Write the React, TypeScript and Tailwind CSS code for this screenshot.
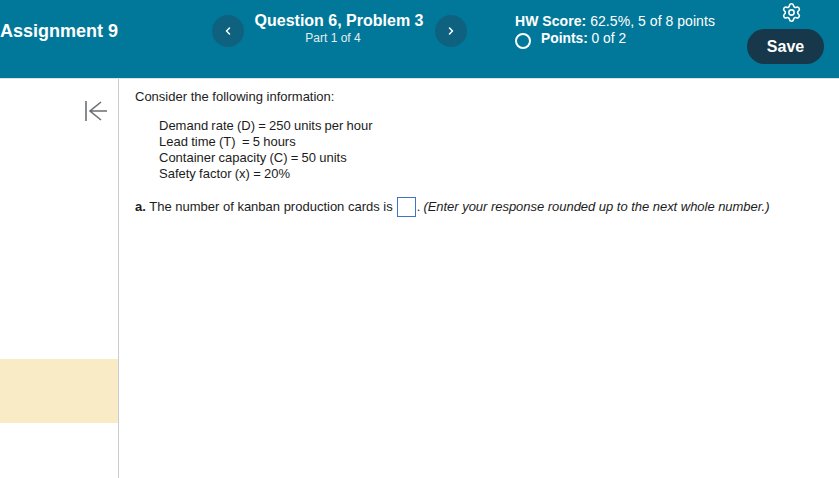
import { ChevronLeft, ChevronRight, Settings } from 'lucide-react';

const givens = [
  'Demand rate (D) = 250 units per hour',
  'Lead time (T)  = 5 hours',
  'Container capacity (C) = 50 units',
  'Safety factor (x) = 20%',
];

function NavButton({ children }: { children: React.ReactNode }) {
  return (
    <div className="w-8 h-8 rounded-full bg-[#0f627f] flex items-center justify-center text-white">
      {children}
    </div>
  );
}

export default function App() {
  return (
    <div className="w-[839px] h-[478px] overflow-hidden bg-white flex flex-col font-['Liberation_Sans',Arial,sans-serif]">
      {/* Header */}
      <div className="h-[79px] shrink-0 bg-[#017899] border-b border-[#d9e2e6] flex items-start text-white">
        <div className="w-[212px] pt-[21px] text-[18px] leading-[21px] font-bold">Assignment 9</div>
        <div className="pt-[15px]">
          <NavButton><ChevronLeft size={12} strokeWidth={3} /></NavButton>
        </div>
        <div className="w-[180px] ml-[5px] pt-[11px] text-center">
          <div className="text-[16px] leading-[19px] font-bold whitespace-nowrap">Question 6, Problem 3</div>
          <div className="pr-[12px] text-[12px] leading-[17px] text-[#e3eef2]">Part 1 of 4</div>
        </div>
        <div className="pt-[15px] ml-[6px]">
          <NavButton><ChevronRight size={12} strokeWidth={3} /></NavButton>
        </div>
        <div className="w-[232px] ml-[48px] pt-[12px] text-[14px] leading-[18px]">
          <div className="whitespace-nowrap tracking-[0.05px]"><span className="font-bold">HW Score:</span> 62.5%, 5 of 8 points</div>
          <div className="flex items-start whitespace-nowrap">
            <span className="w-[16px] h-[16px] mt-[3px] mr-[10px] rounded-full border-2 border-white" />
            <span className="text-[13.8px]"><span className="font-bold">Points:</span> 0 of 2</span>
          </div>
        </div>
        <div className="w-[77px] pt-[2px] flex flex-col items-center">
          <div className="pl-[12px]">
            <Settings size={21} strokeWidth={1.8} />
          </div>
          <div className="mt-[6px] w-[77px] h-[35px] rounded-full bg-[#16384a] flex items-center justify-center text-[16px] font-bold">Save</div>
        </div>
      </div>

      {/* Body */}
      <div className="flex flex-1 min-h-0">
        <div className="w-[119px] shrink-0 border-r border-[#c8ccd2] flex flex-col">
          <div className="h-[280px] pt-[20px] pl-[84px] shrink-0">
            <svg width="24" height="24" viewBox="0 0 24 24" fill="none" stroke="#6b6f73" strokeWidth="1.6">
              <path d="M2 2v20M23 12H6M17 3l-11 9 11 9" />
            </svg>
          </div>
          <div className="h-[64px] w-full bg-[#f9ebc6]" />
        </div>
        <div className="flex-1 pl-[16px] pt-[10px] text-[13px] leading-[16px] text-[#1c1c1c]">
          <p>Consider the following information:</p>
          <div className="mt-[13px] pl-[24px] [word-spacing:-0.4px]">
            {givens.map((line) => (
              <div key={line} className="whitespace-pre">{line}</div>
            ))}
          </div>
          <div className="mt-[15px] flex items-center whitespace-nowrap h-[20px]">
            <span><span className="font-bold">a.</span> The number of kanban production cards is</span>
            <span className="w-[19px] h-[20px] ml-[4px] mr-[1px] border border-[#3f74c4] bg-white" />
            <span>.</span>
            <span className="ml-[3px] italic tracking-[-0.03px]">(Enter your response rounded up to the next whole number.)</span>
          </div>
        </div>
      </div>
    </div>
  );
}
